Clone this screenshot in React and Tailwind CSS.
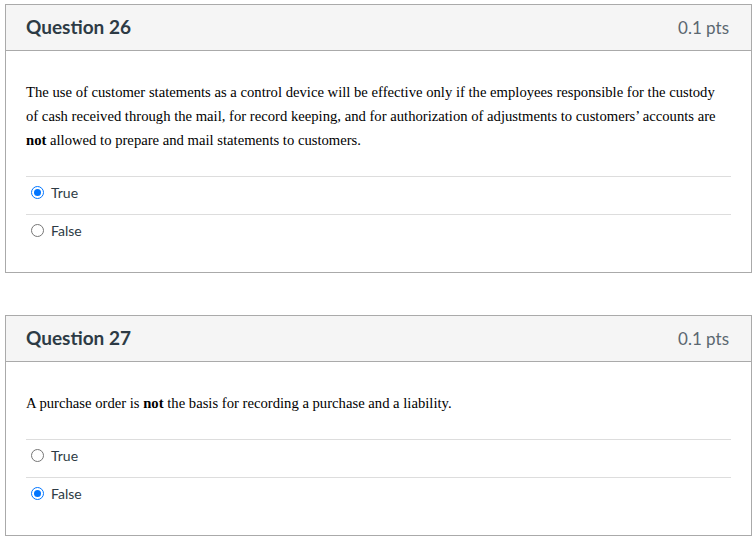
const questions = [
  {
    title: 'Question 26',
    points: '0.1 pts',
    text: (
      <>
        The use of customer statements as a control device will be effective only if the employees responsible for the custody
        <br />
        of cash received through the mail, for record keeping, and for authorization of adjustments to customers’ accounts are
        <br />
        <strong>not</strong> allowed to prepare and mail statements to customers.
      </>
    ),
    answer: 'True',
  },
  {
    title: 'Question 27',
    points: '0.1 pts',
    text: (
      <>
        A purchase order is <strong>not</strong> the basis for recording a purchase and a liability.
      </>
    ),
    answer: 'False',
  },
];

function Radio({ checked }) {
  return checked ? (
    <span className='w-[13px] h-[13px] rounded-full border-[1.5px] border-[#0075ff] bg-white flex items-center justify-center'>
      <span className='w-[7px] h-[7px] rounded-full bg-[#0075ff]' />
    </span>
  ) : (
    <span className='w-[13px] h-[13px] rounded-full border border-[#767676] bg-white' />
  );
}

function QuestionCard({ q }) {
  return (
    <div className='w-[747px] border border-[#aaaaaa] bg-white'>
      <div className='h-[46px] bg-[#f5f5f5] border-b border-[#aaaaaa] flex items-center justify-between pl-5 pr-[22px]'>
        <h2 className="font-['Lato',sans-serif] font-bold text-[19px] text-[#2d3b45]">{q.title}</h2>
        <span className="font-['Lato',sans-serif] text-[17px] text-[#5b6770]">{q.points}</span>
      </div>
      <div className='px-5 pt-[29px] pb-5'>
        <p className="font-['Liberation_Serif',serif] text-[14.67px] leading-[24px] text-black">{q.text}</p>
        <div className='mt-6'>
          {['True', 'False'].map((opt) => (
            <div key={opt} className='h-[38px] pb-[6px] border-t border-[#dddddd] flex items-center gap-[7px] pl-[5px]'>
              <Radio checked={q.answer === opt} />
              <span className="font-['Lato',sans-serif] text-[14px] text-[#2d3b45]">{opt}</span>
            </div>
          ))}
        </div>
      </div>
    </div>
  );
}

export default function App() {
  return (
    <div className='min-h-screen bg-white pl-[5px] pt-1 flex flex-col gap-[42px]'>
      {questions.map((q) => (
        <QuestionCard key={q.title} q={q} />
      ))}
    </div>
  );
}
